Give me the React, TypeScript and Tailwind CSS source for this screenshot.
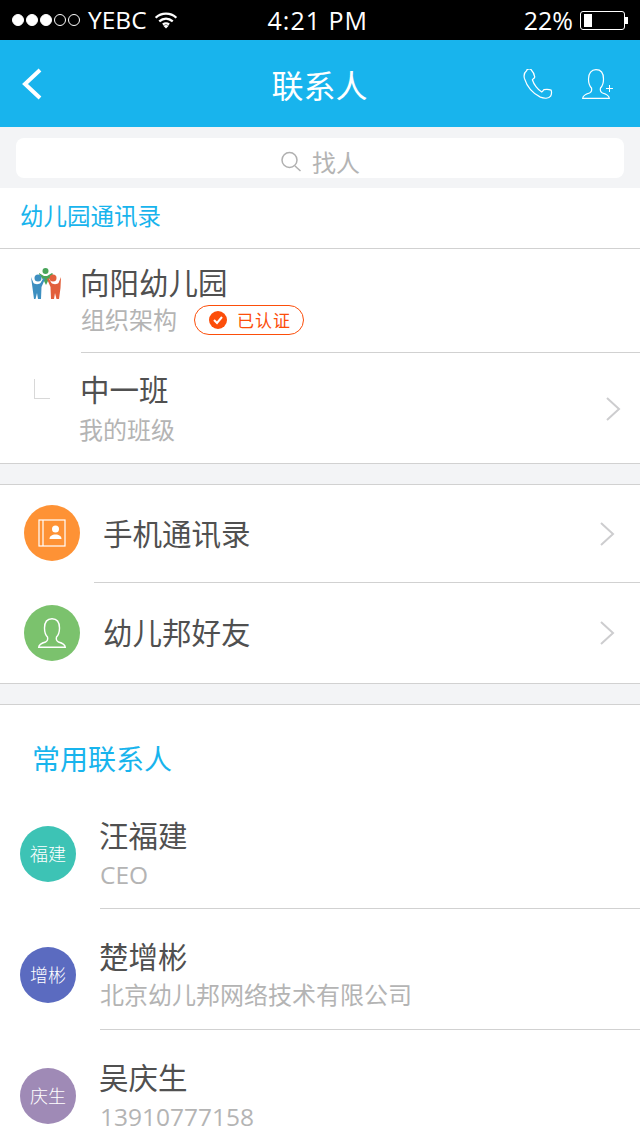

const cjk = "font-['Noto_Sans_CJK_SC',sans-serif] font-normal";
const lat = "font-['Open_Sans','Noto_Sans_CJK_SC',sans-serif]";

function Chevron() {
  return (
    <svg width="16" height="26" viewBox="0 0 16 26" fill="none" stroke="#cdcdcf" strokeWidth="2" className="shrink-0">
      <path d="M2 2l12 11L2 24" />
    </svg>
  );
}

function Bust({ w = 28, h = 30, sw = 1.5 }: { w?: number; h?: number; sw?: number }) {
  return (
    <svg width={w} height={h} viewBox="0 0 28 30" fill="none" stroke="#fff" strokeWidth={sw}>
      <path d="M.7 29.300H27.300C27 26 24 25 20.500 24C18.500 23 18 21 18.500 19C20.500 17 21.500 14 21.500 10C21.500 4 18.500 .7 14 .7C9.500 .7 6.500 4 6.500 10C6.500 14 7.500 17 9.500 19C10 21 9.500 23 7.500 24C4 25 1 26 .7 29.300Z" />
    </svg>
  );
}

function Contact({ initials, color, name, sub, subClass, last }: { initials: string; color: string; name: string; sub: string; subClass: string; last?: boolean }) {
  return (
    <div className="flex items-start h-[121px] pl-[20px]">
      <div className={`mt-[38px] w-[56px] h-[56px] pb-[1px] rounded-full flex items-center justify-center text-white text-[18px] font-['Noto_Sans_CJK_SC',sans-serif] font-light ${color}`}>{initials}</div>
      <div className={`ml-[24px] flex-1 h-full flex flex-col ${last ? "" : "border-b border-[#d1d1d1]"}`}>
        <div className={`text-[29.500px] leading-[40px] mt-[26px] ml-[-1px] text-[#505050] ${cjk}`}>{name}</div>
        <div className={`leading-[34px] text-[#b4b4b4] ${subClass}`}>{sub}</div>
      </div>
    </div>
  );
}

export default function App() {
  return (
    <div className="w-[640px] h-[1136px] overflow-hidden bg-white">
      {/* status bar */}
      <div className={`h-[40px] bg-black text-white flex items-center text-[25px] ${lat}`}>
        <div className="flex items-center gap-[2px] ml-[12px]">
          {[1, 1, 1, 0, 0].map((f, i) => (
            <span key={i} className={`w-[12px] h-[12px] rounded-full border border-white ${f ? "bg-white" : ""}`} />
          ))}
        </div>
        <span className="ml-[8px] leading-[40px] text-[24.500px]">YEBC</span>
        <svg width="24" height="18" viewBox="0 0 26 20" className="ml-[7px]" fill="none" stroke="#fff" strokeWidth="2.600">
          <path d="M1.500 7.500C8 1.500 18 1.500 24.500 7.500" />
          <path d="M5.500 11.500c4.500-3.800 10.500-3.800 15 0" />
          <path d="M9.500 15c2.200-1.500 4.800-1.500 7 0" />
          <path d="M13 19.500l-3-3c2-1.200 4-1.200 6 0z" fill="#fff" stroke="none" />
        </svg>
        <span className="ml-[90px] leading-[40px] tracking-[1px]">4:21 PM</span>
        <span className="ml-auto leading-[40px]">22%</span>
        <div className="ml-[7px] mr-[12px] flex items-center">
          <div className="w-[45px] h-[19px] border border-white rounded-[3px] py-[2px] pl-[3px]">
            <div className="w-[8px] h-full bg-white" />
          </div>
          <div className="w-[3px] h-[7px] bg-white" />
        </div>
      </div>

      {/* header */}
      <div className="h-[87px] bg-[#18b4ed] flex items-center relative">
        <svg width="22" height="34" viewBox="0 0 22 34" fill="none" stroke="#fff" strokeWidth="4" className="ml-[21px]">
          <path d="M19 3L4 17l15 14" />
        </svg>
        <div className={`absolute inset-x-0 pr-[1px] text-center text-white text-[32px] ${cjk}`}>联系人</div>
        <svg width="30" height="30" viewBox="0 0 32 32" fill="none" stroke="#fff" strokeWidth="1.300" className="ml-auto">
          <path d="M4 1.500C1.500 3.500.5 6 1.500 10c2.500 8 9 16 17 20 4 1.500 9 1.500 11-1 1-2 1-5 .5-6.500-2.500-1-5-1-7.500-.5-1 .5-1.500 2-2.500 2.500-4-2-8.500-8-10-13 .5-1 2.500-1.500 2.500-3-.5-3-2-6-4-8-1.500-1-3-.5-4.500 .5z" />
        </svg>
        <div className="ml-[29px] mr-[28px] relative w-[30px] h-[30px]">
          <Bust w={28} h={30} sw={1.200} />
          <span className="absolute right-[-1px] top-[16px] w-[7px] h-[7px] bg-[#18b4ed] bg-[linear-gradient(#fff,#fff),linear-gradient(#fff,#fff)] bg-[length:7px_1px,1px_7px] bg-center bg-no-repeat" />
        </div>
      </div>

      {/* search */}
      <div className="h-[61px] bg-[#f3f4f6] px-[16px] pt-[11px]">
        <div className="h-[40px] bg-white rounded-[8px] flex items-center justify-center text-[#b4b4b4]">
          <svg width="24" height="24" viewBox="0 0 24 24" fill="none" stroke="#b0b0b0" strokeWidth="1.500" className="ml-[-1px] mt-[8px]">
            <circle cx="10.500" cy="10" r="7.500" />
            <path d="M16 16l5.500 5" />
          </svg>
          <span className={`ml-[9px] mt-[8px] text-[24px] leading-[40px] ${cjk}`}>找人</span>
        </div>
      </div>

      {/* school */}
      <div className={`h-[61px] flex items-center pl-[20px] pb-[4px] text-[23.500px] text-[#18b4ed] border-b border-[#d1d1d1] ${cjk}`}>幼儿园通讯录</div>
      <div className="h-[215px] border-b border-[#d1d1d1] flex flex-col">
        <div className="h-[104px] flex">
          <svg width="32" height="31" viewBox="0 0 32 31" className="ml-[30px] mt-[19px] shrink-0">
            <circle cx="15.500" cy="3" r="3" fill="#49a55a" />
            <path d="M9 5l5 3h3l5-3 1 1-5 7-2 4-2-4-5-7z" fill="#49a55a" />
            <circle cx="8" cy="10" r="3.500" fill="#3d8fc0" />
            <path d="M1 9l2.500 6c1 1.500 6 1.500 7 0l3-5 1.500 1-3.500 8-.5 12h-3l-1-6-1.500 6H4L2.500 20z" fill="#3d8fc0" />
            <circle cx="23" cy="10" r="3.500" fill="#e2603c" />
            <path d="M31 9l-2.500 6c-1 1.500-6 1.500-7 0l-3-5-1.500 1 3.500 8 .5 12h3l1-6 1.500 6h2.500l1.500-11z" fill="#e2603c" />
          </svg>
          <div className="ml-[19px] flex-1 flex flex-col border-b border-[#d1d1d1]">
            <div className={`text-[29.500px] leading-[40px] mt-[12px] ml-[-1px] text-[#505050] ${cjk}`}>向阳幼儿园</div>
            <div className="flex items-center mt-[1px]">
              <span className={`text-[24px] leading-[34px] text-[#b4b4b4] ${cjk}`}>组织架构</span>
              <div className="ml-[17px] mt-[2px] w-[110px] h-[30px] rounded-full border border-[#fc4e0a] flex items-center pl-[14px]">
                <span className="w-[18px] h-[18px] rounded-full bg-[#fc4e0a] flex items-center justify-center">
                  <svg width="12" height="12" viewBox="0 0 12 12" fill="none" stroke="#fff" strokeWidth="2"><path d="M2 6l3 3 5-6" /></svg>
                </span>
                <span className={`ml-[10px] text-[17px] text-[#fc4e0a] tracking-[1px] ${cjk}`}>已认证</span>
              </div>
            </div>
          </div>
        </div>
        <div className="flex-1 flex items-start pr-[19px]">
          <div className="ml-[34px] mt-[26px] w-[16px] h-[20px] border-l border-b border-[#d8d8d8]" />
          <div className="ml-[30px] flex-1">
            <div className={`text-[29.500px] leading-[40px] mt-[15px] text-[#505050] ${cjk}`}>中一班</div>
            <div className={`text-[24px] leading-[34px] mt-[4px] ml-[-1px] text-[#b4b4b4] ${cjk}`}>我的班级</div>
          </div>
          <div className="mt-[43px]"><Chevron /></div>
        </div>
      </div>

      <div className="h-[21px] bg-[#f3f4f6] border-b border-[#d1d1d1]" />

      {/* links */}
      <div className="h-[199px] border-b border-[#d1d1d1] flex flex-col">
        <div className="h-[98px] flex items-center pl-[24px]">
          <div className="w-[56px] h-[56px] mb-[2px] rounded-full bg-[#fe9235] flex items-center justify-center">
            <svg width="28" height="28" viewBox="0 0 28 28" fill="none" stroke="#fff" strokeWidth="1.200">
              <rect x="1" y="1" width="26" height="26" />
              <path d="M5 1v26" />
              <circle cx="17.500" cy="10" r="3.500" fill="#fff" stroke="none" />
              <path d="M11.500 20c0-3 2.500-4.500 6-4.500s6 1.500 6 4.500z" fill="#fff" stroke="none" />
            </svg>
          </div>
          <div className="ml-[14px] flex-1 h-full border-b border-[#d1d1d1] flex items-center pr-[25px]">
            <span className={`ml-[9px] pb-[2px] flex-1 text-[29.500px] text-[#505050] ${cjk}`}>手机通讯录</span>
            <Chevron />
          </div>
        </div>
        <div className="flex-1 flex items-center pl-[24px] pr-[25px]">
          <div className="w-[56px] h-[56px] rounded-full bg-[#7bc26d] flex items-center justify-center">
            <Bust w={30} h={30} sw={1.400} />
          </div>
          <span className={`ml-[23px] pb-[4px] flex-1 text-[29.500px] text-[#505050] ${cjk}`}>幼儿邦好友</span>
          <Chevron />
        </div>
      </div>

      <div className="h-[21px] bg-[#f3f4f6] border-b border-[#d1d1d1]" />

      <div className={`h-[83px] pl-[32px] pt-[22px] flex items-center text-[28px] text-[#18b4ed] ${cjk}`}>常用联系人</div>
      <Contact initials="福建" color="bg-[#3dc3b5]" name="汪福建" sub="CEO" subClass={`mt-[4px] text-[24.500px] ${lat}`} />
      <Contact initials="增彬" color="bg-[#5b6bc0]" name="楚增彬" sub="北京幼儿邦网络技术有限公司" subClass={`mt-[2px] text-[24px] ${cjk}`} />
      <Contact initials="庆生" color="bg-[#9f8ab6]" name="吴庆生" sub="13910777158" subClass={`mt-[4px] text-[24.500px] ${lat}`} last />
    </div>
  );
}
